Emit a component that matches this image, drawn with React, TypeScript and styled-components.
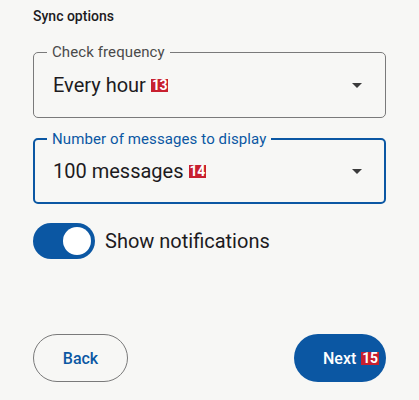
import React from "react";
import styled, { createGlobalStyle } from "styled-components";

const Global = createGlobalStyle`
  html, body {
    margin: 0;
    padding: 0;
    background: #f7f7f5;
  }
  body {
    font-family: Roboto, "Noto Sans", sans-serif;
    color: #1d1b1e;
  }
`;

const Page = styled.div`
  width: 419px;
  height: 400px;
  box-sizing: border-box;
  padding: 6px 33px 0;
  display: flex;
  flex-direction: column;
  background: #f7f7f5;
`;

const Title = styled.div`
  font-size: 14px;
  line-height: 20px;
  font-weight: 500;
  color: #1d1b1e;
`;

const Field = styled.div<{ $focused?: boolean; $top: number }>`
  position: relative;
  margin-top: ${(p) => p.$top}px;
  height: 66px;
  box-sizing: border-box;
  border: ${(p) => (p.$focused ? "2px solid #0b57a3" : "1px solid #7a7a7a")};
  border-radius: 5px;
  display: flex;
  align-items: center;
  padding: 0 ${(p) => (p.$focused ? 15 : 16)}px 0 ${(p) => (p.$focused ? 18 : 19)}px;
`;

const FieldLabel = styled.span<{ $focused?: boolean }>`
  position: absolute;
  top: -10px;
  left: ${(p) => (p.$focused ? 12 : 13)}px;
  padding: 0 5px;
  background: #f7f7f5;
  font-size: 15px;
  line-height: 18px;
  letter-spacing: 0.1px;
  color: ${(p) => (p.$focused ? "#0b57a3" : "#4a4a4a")};
`;

const Value = styled.div`
  flex: 1;
  display: flex;
  align-items: center;
  font-size: 20px;
  line-height: 26px;
  color: #1d1b1e;
`;

const Badge = styled.span`
  display: inline-flex;
  align-items: center;
  justify-content: center;
  background: #c8202f;
  color: #ffffff;
  font-weight: 700;
  font-size: 14px;
  line-height: 13px;
  height: 13px;
  padding: 0 1px;
  margin-left: 5px;
  letter-spacing: -0.3px;
`;

const Arrow = styled.svg`
  width: 24px;
  height: 24px;
  fill: #3b3b3b;
  flex-shrink: 0;
`;

const ToggleRow = styled.div`
  margin-top: 19px;
  display: flex;
  align-items: center;
  gap: 10px;
`;

const Track = styled.div`
  width: 62px;
  height: 36px;
  border-radius: 18px;
  background: #0b57a3;
  display: flex;
  align-items: center;
  justify-content: flex-end;
  padding: 0 4px;
  box-sizing: border-box;
`;

const Thumb = styled.div`
  width: 28px;
  height: 28px;
  border-radius: 50%;
  background: #ffffff;
`;

const ToggleLabel = styled.span`
  font-size: 20px;
  line-height: 26px;
  color: #1d1b1e;
`;

const Actions = styled.div`
  margin-top: 75px;
  display: flex;
  justify-content: space-between;
`;

const Button = styled.button<{ $primary?: boolean }>`
  height: 48px;
  border-radius: 24px;
  box-sizing: border-box;
  display: flex;
  align-items: center;
  font-family: Roboto, "Noto Sans", sans-serif;
  font-size: 16px;
  font-weight: 500;
  cursor: pointer;
  border: ${(p) => (p.$primary ? "none" : "1px solid #7a7a7a")};
  background: ${(p) => (p.$primary ? "#0b57a3" : "transparent")};
  color: ${(p) => (p.$primary ? "#ffffff" : "#0b57a3")};
  width: ${(p) => (p.$primary ? 92 : 95)}px;
  justify-content: ${(p) => (p.$primary ? "flex-start" : "center")};
  padding: ${(p) => (p.$primary ? "0 0 0 29px" : "0")};
`;

const DropArrow = () => (
  <Arrow viewBox="0 0 24 24">
    <path d="M7 10l5 5 5-5z" />
  </Arrow>
);

export default function App() {
  return (
    <Page>
      <Global />
      <Title>Sync options</Title>
      <Field $top={26}>
        <FieldLabel>Check frequency</FieldLabel>
        <Value>
          Every hour<Badge>13</Badge>
        </Value>
        <DropArrow />
      </Field>
      <Field $top={20} $focused>
        <FieldLabel $focused>Number of messages to display</FieldLabel>
        <Value>
          100 messages<Badge>14</Badge>
        </Value>
        <DropArrow />
      </Field>
      <ToggleRow>
        <Track>
          <Thumb />
        </Track>
        <ToggleLabel>Show notifications</ToggleLabel>
      </ToggleRow>
      <Actions>
        <Button>Back</Button>
        <Button $primary>
          Next<Badge>15</Badge>
        </Button>
      </Actions>
    </Page>
  );
}
